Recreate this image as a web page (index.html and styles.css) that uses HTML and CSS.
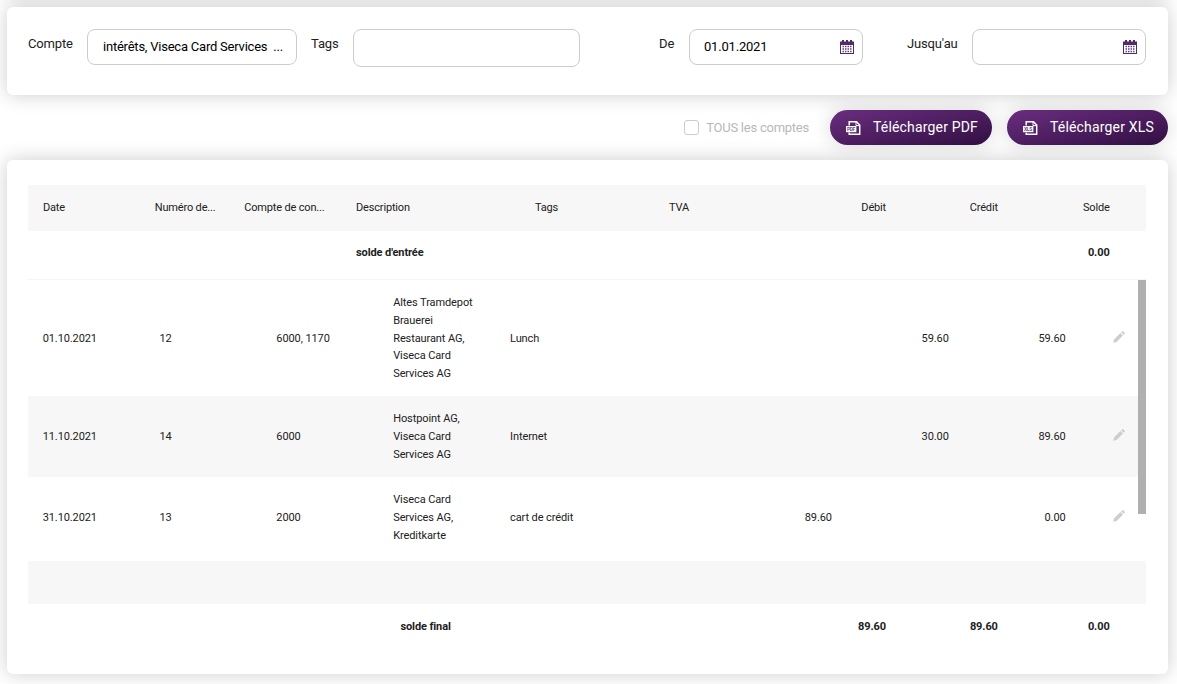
FILE: index.html
```
<!DOCTYPE html>
<html lang="fr">
<head>
    <meta charset="UTF-8">
    <meta name="viewport" content="width=device-width, initial-scale=1.0">
    <title>Extrait de compte</title>
    <link rel="stylesheet" href="styles.css">
</head>
<body>
    <svg class="sprite" width="0" height="0">
        <symbol id="icon-calendar" viewBox="0 0 14 14">
            <path d="M0 1.5h2V0h2v1.500h2V0h2v1.500h2V0h2v1.500h2V14H0z" fill="#522a66"/>
            <path d="M1 5h12v8H1z" fill="#fff"/>
            <path d="M2.500 6.500h9.500M2.500 9h9.500M2.500 11.500h9.500" stroke="#67417a" stroke-width="1.400" stroke-dasharray="1.500 1"/>
        </symbol>
        <symbol id="icon-file" viewBox="0 0 15 14">
            <path d="M3.2 4.5V.8h7.3l3.2 3.2v9.2H3.2v-1.8" fill="none" stroke="#fff" stroke-width="1.5"/>
            <path d="M10 1v3.6h3.7" fill="none" stroke="#fff" stroke-width="1"/>
            <path d="M0 5h10.4v6.2H0z" fill="#fff"/>
        </symbol>
        <symbol id="icon-pencil" viewBox="0 0 12 12">
            <path d="M.2 11.8l.8-3.4L7.4 2l2.6 2.6L3.6 11zM8.2 1.4l.8-.8a1.200 1.200 0 0 1 1.600 0l.8.8a1.200 1.200 0 0 1 0 1.600l-.8.8z" fill="#cdcdcd"/>
        </symbol>
    </svg>

    <section class="card filters">
        <label>Compte</label>
        <div class="field account">intérêts, Viseca Card Services&nbsp; ...</div>
        <label class="label-tags">Tags</label>
        <div class="field tags"></div>
        <label class="label-from">De</label>
        <div class="field date"><span>01.01.2021</span><svg class="calendar"><use href="#icon-calendar"/></svg></div>
        <label class="label-to">Jusqu'au</label>
        <div class="field date"><svg class="calendar"><use href="#icon-calendar"/></svg></div>
    </section>

    <div class="actions">
        <span class="checkbox"></span>
        <span class="all-accounts">TOUS les comptes</span>
        <button class="btn">
            <svg class="file" viewBox="0 0 15 14"><use href="#icon-file"/><text x="1" y="10" textLength="8.5">PDF</text></svg>
            <span>Télécharger PDF</span>
        </button>
        <button class="btn">
            <svg class="file" viewBox="0 0 15 14"><use href="#icon-file"/><text x="1" y="10" textLength="8.5">XLS</text></svg>
            <span>Télécharger XLS</span>
        </button>
    </div>

    <section class="card report">
        <div class="row head">
            <div>Date</div>
            <div>Numéro de...</div>
            <div>Compte de con...</div>
            <div>Description</div>
            <div>Tags</div>
            <div>TVA</div>
            <div class="num">Débit</div>
            <div class="num">Crédit</div>
            <div class="num">Solde</div>
        </div>
        <div class="row opening">
            <div class="opening-label">solde d'entrée</div>
            <div class="num total-balance">0.00</div>
        </div>

        <div class="scroll">
            <div class="entries">
                <div class="entry">
                    <div>01.10.2021</div>
                    <div>12</div>
                    <div>6000, 1170</div>
                    <div>Altes Tramdepot Brauerei Restaurant AG, Viseca Card Services AG</div>
                    <div>Lunch</div>
                    <div></div>
                    <div class="num"></div>
                    <div class="num">59.60</div>
                    <div class="num">59.60</div>
                    <svg class="pencil"><use href="#icon-pencil"/></svg>
                </div>
                <div class="entry">
                    <div>11.10.2021</div>
                    <div>14</div>
                    <div>6000</div>
                    <div>Hostpoint AG, Viseca Card Services AG</div>
                    <div>Internet</div>
                    <div></div>
                    <div class="num"></div>
                    <div class="num">30.00</div>
                    <div class="num">89.60</div>
                    <svg class="pencil"><use href="#icon-pencil"/></svg>
                </div>
                <div class="entry">
                    <div>31.10.2021</div>
                    <div>13</div>
                    <div>2000</div>
                    <div>Viseca Card Services AG, Kreditkarte</div>
                    <div>cart de crédit</div>
                    <div></div>
                    <div class="num">89.60</div>
                    <div class="num"></div>
                    <div class="num">0.00</div>
                    <svg class="pencil"><use href="#icon-pencil"/></svg>
                </div>
            </div>
            <div class="thumb"></div>
        </div>

        <div class="spacer"></div>
        <div class="row closing">
            <div class="closing-label">solde final</div>
            <div class="num total-debit">89.60</div>
            <div class="num">89.60</div>
            <div class="num">0.00</div>
        </div>
    </section>
</body>
</html>
```
FILE: styles.css
```
* {
    box-sizing: border-box;
}

body {
    margin: 0;
    padding: 7px 9px 0 7px;
    height: 684px;
    overflow: hidden;
    background-color: #fff;
    font-family: Roboto, "Liberation Sans", sans-serif;
    font-size: 11px;
    letter-spacing: -0.1px;
    color: #212121;
}

/* bottom edge of the panel above the filters */
body::before {
    content: "";
    position: absolute;
    top: -48px;
    left: 7px;
    right: 9px;
    height: 42px;
    box-shadow: 0 0 20px rgba(0, 0, 0, 0.2);
}

.sprite {
    position: absolute;
}

.card {
    position: relative;
    background-color: #fff;
    border-radius: 6px;
    box-shadow: 0 0 20px rgba(0, 0, 0, 0.2);
}

/* Filters */
.filters {
    display: flex;
    align-items: flex-start;
    height: 88px;
    padding: 22px 22px 0 21px;
    font-size: 13px;
    letter-spacing: -0.15px;
}

.filters label {
    line-height: 30px;
    width: 59px;
}

.filters .label-tags {
    width: 42px;
    margin-left: 14px;
}

.filters .label-from {
    width: 30px;
    margin-left: 79px;
}

.filters .label-to {
    width: 65px;
    margin-left: 44px;
}

.field {
    display: flex;
    align-items: center;
    height: 36px;
    border: 1px solid #ccc;
    border-radius: 8px;
    padding: 0 8px 0 15px;
    color: #000;
    white-space: nowrap;
}

.account {
    width: 210px;
    padding-bottom: 2px;
    letter-spacing: -0.22px;
}

.tags {
    width: 227px;
    height: 38px;
}

.date {
    width: 174px;
    padding-left: 14px;
}

.date span {
    padding-bottom: 2px;
    letter-spacing: -0.2px;
}

.calendar {
    width: 14px;
    height: 14px;
    margin-left: auto;
}

/* Actions */
.actions {
    display: flex;
    align-items: center;
    justify-content: flex-end;
    height: 65px;
}

.checkbox {
    width: 15px;
    height: 15px;
    border: 1px solid #ccc;
    border-radius: 3px;
    margin-right: 7px;
}

.all-accounts {
    font-size: 13px;
    letter-spacing: -0.24px;
    color: #b8b8b8;
    margin-right: 21px;
}

.btn {
    display: flex;
    align-items: center;
    width: 162px;
    height: 35px;
    padding: 0 0 0 16px;
    border: 0;
    border-radius: 18px;
    background: linear-gradient(to bottom right, #6b2e80, #310f42);
    box-shadow: 0 0 20px rgba(0, 0, 0, 0.16);
    color: #fff;
    font-family: inherit;
    font-size: 14px;
    letter-spacing: 0.17px;
    white-space: nowrap;
}

.btn + .btn {
    width: 161px;
    margin-left: 15px;
}

.btn span {
    padding-bottom: 2px;
}

.file {
    width: 15px;
    height: 14px;
    margin-right: 12px;
    flex-shrink: 0;
}

.file text {
    font-size: 5px;
    font-weight: bold;
    fill: #6b4a80;
}

/* Report */
.report {
    height: 514px;
    padding: 25px 22px 0 21px;
}

.row {
    display: grid;
    grid-template-columns: 10% 8% 10% 16% 12% 12% 10% 10% 10% 2%;
    align-items: center;
}

.row > div {
    padding: 0 14px 0 15px;
    white-space: nowrap;
}

.num {
    text-align: right;
}

.head {
    height: 46px;
    padding-bottom: 2px;
    background-color: #f7f7f7;
    letter-spacing: -0.17px;
}

.opening {
    height: 49px;
    padding-bottom: 5px;
    border-bottom: 1px solid #f4f4f4;
    font-weight: bold;
}

.opening-label {
    grid-column: 4;
}

.total-balance {
    grid-column: 9;
}

.scroll {
    display: flex;
    align-items: flex-start;
    height: 281px;
}

.entries {
    flex: 1;
}

.entry {
    display: grid;
    grid-template-columns: repeat(9, 2fr) 1fr;
    align-items: center;
    height: 81px;
    padding-top: 0.6px;
    line-height: 17.8px;
}

.entry:first-child {
    height: 116px;
    padding-top: 1px;
}

.entry:nth-child(even) {
    background-color: #f7f7f7;
}

.entry > div {
    min-width: 0;
    padding: 0 14px 0 14.7px;
}

.pencil {
    width: 12px;
    height: 12px;
    margin: 0 0 4px 33px;
}

.thumb {
    width: 8px;
    height: 234px;
    background-color: #b0b0b0;
}

.spacer {
    height: 43px;
    background-color: #f7f7f7;
}

.closing {
    height: 44px;
    font-weight: bold;
}

.row > .closing-label {
    grid-column: 4;
    padding-left: 59.4px;
}

.total-debit {
    grid-column: 7;
}
```
